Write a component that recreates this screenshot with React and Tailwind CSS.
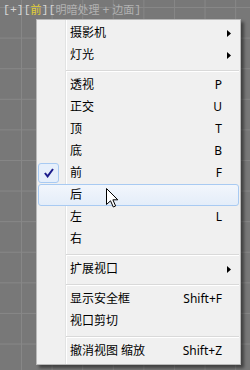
import React from 'react';

const font = "font-['Noto_Sans','Noto_Sans_CJK_SC',sans-serif]";
const mono = "font-['Liberation_Mono',monospace]";

const items = [
  { label: '摄影机', sub: true },
  { label: '灯光', sub: true },
  { sep: true },
  { label: '透视', key: 'P' },
  { label: '正交', key: 'U' },
  { label: '顶', key: 'T' },
  { label: '底', key: 'B' },
  { label: '前', key: 'F', checked: true },
  { label: '后', hover: true },
  { label: '左', key: 'L' },
  { label: '右' },
  { sep: true },
  { label: '扩展视口', sub: true },
  { sep: true },
  { label: '显示安全框', key: 'Shift+F' },
  { label: '视口剪切' },
  { sep: true },
  { label: '撤消视图 缩放', key: 'Shift+Z' },
];

function Arrow() {
  return (
    <svg width="4" height="7" viewBox="0 0 4 7" className="block">
      <path d="M0 0 L4 3.5 L0 7 Z" fill="#000" />
    </svg>
  );
}

function Check() {
  return (
    <svg width="10" height="10" viewBox="0 0 10 10" className="block">
      <path d="M0.9 5 L3.6 8.4 L9 1" fill="none" stroke="#1c1c8c" strokeWidth="2" />
    </svg>
  );
}

function Row({ item }) {
  if (item.sep) {
    return (
      <div className="h-[8px] pl-[28px] pt-[4px]">
        <div className="h-px bg-[#d9d9d9]" />
        <div className="h-px bg-white" />
      </div>
    );
  }
  return (
    <div
      className={`relative flex h-[22px] items-center rounded-[3px] border ${
        item.hover
          ? 'border-[#a8caf2] bg-[linear-gradient(to_bottom,#f2f6fc,#e4edf9)]'
          : 'border-transparent'
      }`}
    >
      <div className="flex w-[31px] shrink-0 items-center self-stretch">
        {item.checked && (
          <div className="flex h-[20px] w-[21px] -ml-px items-center justify-center rounded-[3px] border border-[#a8caf2] bg-[#e6effb]">
            <Check />
          </div>
        )}
      </div>
      <span className="flex-1 whitespace-pre text-[12px] leading-none text-black">{item.label}</span>
      {item.key && (
        <span className="mr-[16px] text-[12px] leading-none text-black">{item.key}</span>
      )}
      {item.sub && (
        <span className="mr-[7px]">
          <Arrow />
        </span>
      )}
    </div>
  );
}

export default function App() {
  return (
    <div
      className={`relative h-[370px] w-[250px] overflow-hidden bg-[#787878] bg-[linear-gradient(to_right,#878787_1px,transparent_1px),linear-gradient(to_bottom,#878787_1px,transparent_1px)] bg-[length:30.6px_30.6px] bg-[position:21px_7px] ${font}`}
    >
      {/* viewport label */}
      <div className="flex items-center pl-[3px] pt-[3px] h-[17px] text-[11px] leading-[14px] whitespace-pre">
        <span className={`${mono} text-[11.5px] text-[#d6d6d6]`}>[+][</span>
        <span className="text-[#e2cf36]">前</span>
        <span className={`${mono} text-[11.5px] text-[#d6d6d6]`}>][</span>
        <span className="text-[#b2b2b2]">明暗处理</span>
        <span className="px-[3px] text-[12px] text-[#b2b2b2]">+</span>
        <span className="text-[#b2b2b2]">边面</span>
        <span className={`${mono} text-[11.5px] text-[#b2b2b2]`}>]</span>
      </div>

      {/* context menu */}
      <div className="absolute left-[36px] top-[19px] w-[205px] border border-[#b9b9b9] bg-[#f0f0f0] bg-[linear-gradient(to_right,transparent_28px,#e2e3e3_28px,#e2e3e3_29px,#ffffff_29px,#ffffff_30px,transparent_30px)] px-px py-[2px] shadow-[3px_3px_3px_rgba(0,0,0,0.45)]">
        {items.map((item, i) => (
          <Row key={i} item={item} />
        ))}
      </div>

      {/* mouse cursor */}
      <svg width="13" height="20" viewBox="0 0 13 20" className="absolute left-[106px] top-[188px]">
        <path
          d="M0.5 0.5 L0.5 16.5 L4.5 12.8 L7.3 19 L9.6 18 L6.9 11.8 L11.8 11.8 Z"
          fill="#fff"
          stroke="#000"
          strokeWidth="1"
          strokeLinejoin="miter"
        />
      </svg>
    </div>
  );
}
